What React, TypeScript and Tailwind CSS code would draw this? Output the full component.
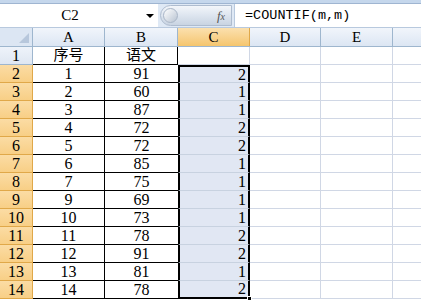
const rows = [
  { n: 2, a: "1", b: "91", c: "2" },
  { n: 3, a: "2", b: "60", c: "1" },
  { n: 4, a: "3", b: "87", c: "1" },
  { n: 5, a: "4", b: "72", c: "2" },
  { n: 6, a: "5", b: "72", c: "2" },
  { n: 7, a: "6", b: "85", c: "1" },
  { n: 8, a: "7", b: "75", c: "1" },
  { n: 9, a: "9", b: "69", c: "1" },
  { n: 10, a: "10", b: "73", c: "1" },
  { n: 11, a: "11", b: "78", c: "2" },
  { n: 12, a: "12", b: "91", c: "2" },
  { n: 13, a: "13", b: "81", c: "1" },
  { n: 14, a: "14", b: "78", c: "2" },
];

const font = { fontFamily: "'Liberation Serif', 'Noto Sans CJK SC', serif" };
const mono = { fontFamily: "'Liberation Mono', 'Noto Sans CJK SC', monospace" };

const App = () => {
  return (
    <div className="w-[421px] h-[300px] overflow-hidden bg-white text-black text-[16px] leading-none" style={font}>
      {/* ribbon edge */}
      <div className="h-[4px] bg-[#c5d7ec] border-b border-[#9fb5d1]" />

      {/* formula bar */}
      <div className="flex h-[24px] bg-[#dfe9f5] border-b border-[#b8c9de]">
        <div className="w-[158px] bg-white flex items-center relative">
          <p className="w-[140px] text-center text-[15px]">C2</p>
          <div className="absolute left-[146px] top-[10px] w-0 h-0 border-l-[4px] border-r-[4px] border-t-[4px] border-l-transparent border-r-transparent border-t-black" />
        </div>
        <div className="w-[76px] flex items-center">
          <div className="relative ml-[2px] h-[21px] w-[72px] rounded-l-full bg-gradient-to-b from-[#f3f6fa] via-[#dde5ef] to-[#c9d4e2] border border-[#aebccf] flex items-center justify-end pr-[6px]">
            <div className="absolute left-[2px] top-[2px] w-[15px] h-[15px] rounded-full bg-gradient-to-br from-white to-[#b9c4d2] border border-[#a9b6c7]" />
            <span className="italic text-[13px] text-[#555]">
              f<span className="text-[10px]">x</span>
            </span>
          </div>
        </div>
        <div className="flex-1 bg-white flex items-center pl-[10px] border-l border-[#b8c9de]">
          <p className="text-[13.5px]" style={mono}>=COUNTIF(m,m)</p>
        </div>
      </div>

      {/* column header */}
      <div className="flex h-[19px] text-[15px] bg-gradient-to-b from-[#f1f5fb] to-[#dce6f3] border-b border-[#9eb6ce]">
        <div className="w-[33px] border-r border-[#9eb6ce] relative bg-[#dce6f3]">
          <div className="absolute right-[3px] bottom-[3px] w-0 h-0 border-l-[10px] border-l-transparent border-b-[10px] border-b-[#b7c7dc]" />
        </div>
        <div className="w-[72px] border-r border-[#9eb6ce] flex items-center justify-center">A</div>
        <div className="w-[73px] border-r border-[#9eb6ce] flex items-center justify-center">B</div>
        <div className="w-[72px] border-r border-[#e0a849] bg-gradient-to-b from-[#fbe0ae] to-[#f5c56d] flex items-center justify-center">C</div>
        <div className="w-[71px] border-r border-[#9eb6ce] flex items-center justify-center">D</div>
        <div className="w-[72px] border-r border-[#9eb6ce] flex items-center justify-center">E</div>
        <div className="flex-1" />
      </div>

      {/* row 1 */}
      <div className="flex h-[18px]">
        <div className="w-[33px] border-r border-b border-[#9eb6ce] bg-gradient-to-b from-[#eef3fa] to-[#dfe7f2] flex items-center justify-center">1</div>
        <div className="w-[72px] border-r border-b border-black flex items-center justify-center text-[15px]">序号</div>
        <div className="w-[73px] border-r border-b border-black flex items-center justify-center text-[15px]">语文</div>
        <div className="w-[72px] border-r border-b border-[#d0d7e5]" />
        <div className="w-[71px] border-r border-b border-[#d0d7e5]" />
        <div className="w-[72px] border-r border-b border-[#d0d7e5]" />
        <div className="flex-1 border-b border-[#d0d7e5]" />
      </div>

      {rows.map((r, i) => (
        <div key={r.n} className="flex h-[18px]">
          <div className="w-[33px] border-r border-b border-[#e0a849] bg-gradient-to-b from-[#fbdca4] to-[#f8cf86] flex items-center justify-center">
            {r.n}
          </div>
          <div className="w-[72px] border-r border-b border-black flex items-center justify-center">{r.a}</div>
          <div className="w-[73px] border-b border-black flex items-center justify-center">{r.b}</div>
          <div
            className={
              "w-[72px] border-l-2 border-r-2 border-black bg-[#e1e7f3] flex items-center justify-end pr-[2px] relative " +
              (i === 0 ? "border-t-2 " : "") +
              (i === rows.length - 1 ? "border-b-2" : "border-b border-b-[#c8d2e0]")
            }
          >
            {r.c}
            {i === rows.length - 1 && (
              <div className="absolute right-[-4px] bottom-[-4px] w-[5px] h-[5px] bg-black border border-white" />
            )}
          </div>
          <div className="w-[71px] border-r border-b border-[#d0d7e5]" />
          <div className="w-[72px] border-r border-b border-[#d0d7e5]" />
          <div className="flex-1 border-b border-[#d0d7e5]" />
        </div>
      ))}
    </div>
  );
};

export default App;
